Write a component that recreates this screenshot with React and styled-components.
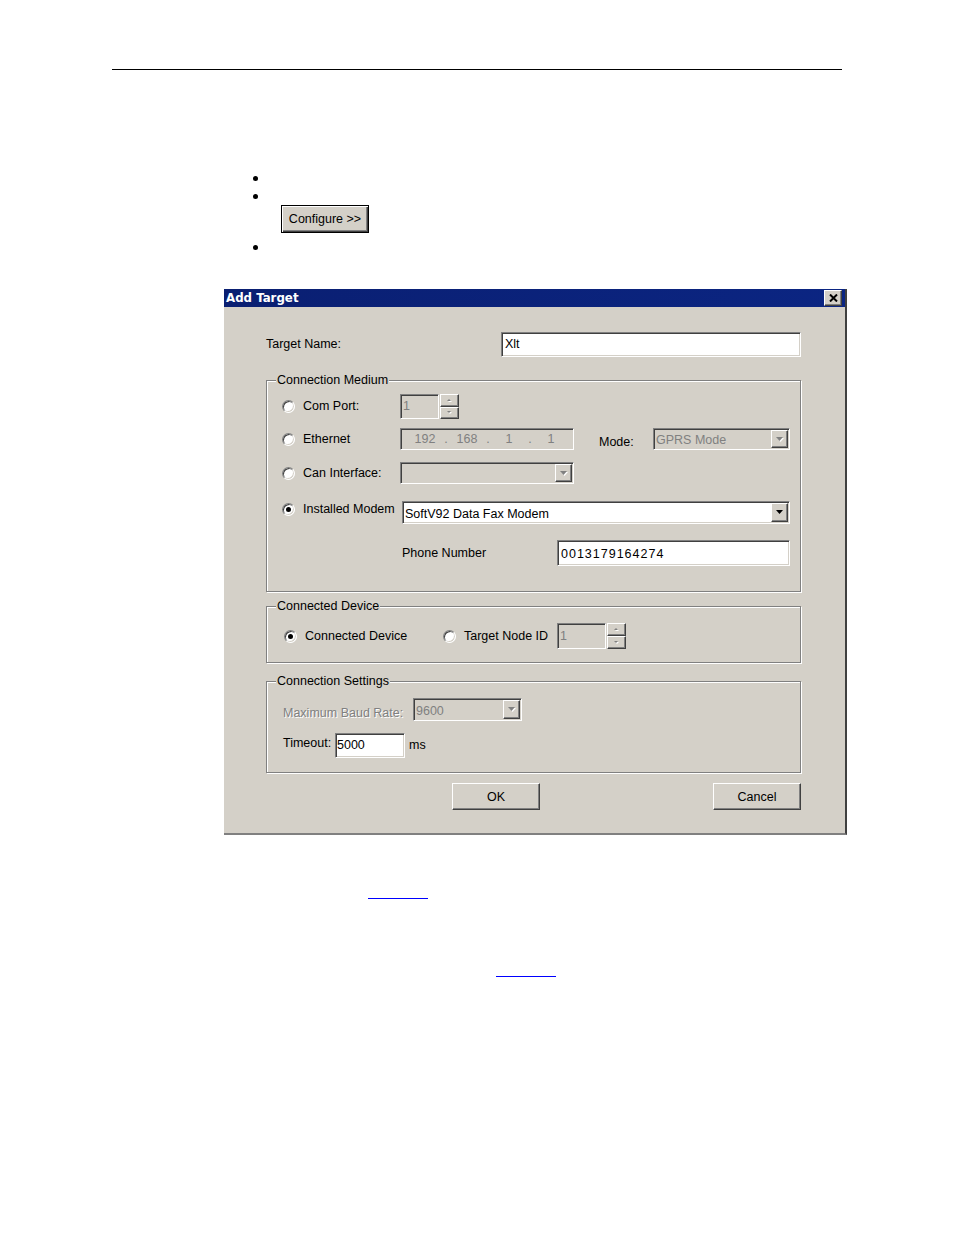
import React from "react"
import styled, { createGlobalStyle, css } from "styled-components"

/* Add Target dialog, Windows 2000 look */

const FACE = "#d4d0c8"
const SHADOW = "#808080"
const DARK = "#404040"

const GlobalStyle = createGlobalStyle`
  html, body {
    margin: 0;
    padding: 0;
    background: #fff;
  }
  body {
    font-family: "Liberation Sans", Arial, sans-serif;
  }
`

const raised = css`
  background: ${FACE};
  border: 1px solid;
  border-color: #fff ${DARK} ${DARK} #fff;
  box-shadow: inset -1px -1px 0 ${SHADOW};
`

const sunken = css`
  border: 1px solid;
  border-color: ${SHADOW} #fff #fff ${SHADOW};
  box-shadow: inset 1px 1px 0 ${DARK}, inset -1px -1px 0 ${FACE};
`

const Page = styled.div`
  width: 954px;
  min-height: 1235px;
  padding-top: 69px;
  box-sizing: border-box;
`

const Rule = styled.hr`
  width: 730px;
  height: 0;
  margin: 0 0 0 112px;
  border: 0;
  border-top: 1px solid #000;
`

const Bullets = styled.ul`
  list-style: none;
  margin: 99px 0 0;
  padding: 0 0 0 253px;
`

const Bullet = styled.li`
  display: flex;
  align-items: center;
  height: ${p => p.$h || 19}px;
  margin-top: ${p => p.$mt || 0}px;

  &::before {
    content: "";
    width: 5px;
    height: 5px;
    border-radius: 50%;
    background: #000;
  }
`

const ButtonItem = styled.li`
  padding-left: 28px;
`

const PushButton = styled.button`
  ${raised}
  box-sizing: border-box;
  width: 88px;
  height: ${p => p.$h || 27}px;
  padding: 0;
  font: 12.5px "Liberation Sans", Arial, sans-serif;
  color: #000;

  ${p => p.$default && css`
    border: 1px solid #000;
    box-shadow: inset 1px 1px 0 #fff, inset -1px -1px 0 ${DARK}, inset -2px -2px 0 ${SHADOW};
  `}
`

const Dialog = styled.div`
  box-sizing: border-box;
  width: 623px;
  margin: 32px 0 0 224px;
  background: ${FACE};
  border-right: 2px solid ${DARK};
  border-bottom: 2px solid ${SHADOW};
  font-size: 12.5px;
  color: #000;
`

const TitleBar = styled.div`
  display: flex;
  align-items: center;
  justify-content: space-between;
  height: 18px;
  padding: 0 3px 0 2px;
  background: linear-gradient(90deg, #0a1f72, #0b2582);
  color: #fff;
  font: bold 11.8px "DejaVu Sans", Verdana, sans-serif;
`

const CloseBox = styled.button`
  ${raised}
  box-sizing: border-box;
  width: 18px;
  height: 16px;
  padding: 0;
  display: flex;
  align-items: center;
  justify-content: center;
`

const DialogBody = styled.div`
  padding: 25px 44px 23px 42px;
`

const Row = styled.div`
  display: flex;
  align-items: ${p => p.$align || "center"};
  justify-content: ${p => p.$justify || "flex-start"};
  height: ${p => p.$h}px;
  margin-top: ${p => p.$mt || 0}px;
`

const Text = styled.span`
  flex: none;
  line-height: 15px;
  white-space: nowrap;
  align-self: ${p => p.$self || "auto"};
  width: ${p => (p.$w ? `${p.$w}px` : "auto")};
  margin-left: ${p => p.$ml || 0}px;
  margin-top: ${p => p.$mt || 0}px;
  color: ${p => (p.$off ? SHADOW : "inherit")};
  text-shadow: ${p => (p.$off ? "1px 1px 0 #fff" : "none")};
`

const Group = styled.section`
  margin-top: ${p => p.$mt}px;
  padding: 0 10px ${p => p.$pb}px ${p => p.$pl}px;
  border: 1px solid ${SHADOW};
  box-shadow: inset 1px 1px 0 #fff, 1px 1px 0 #fff;
`

const GroupTitle = styled.div`
  width: fit-content;
  margin: -8px 0 0 ${p => 9 - p.$pl}px;
  padding: 0 1px;
  line-height: 15px;
  background: ${FACE};
`

const Choice = styled.label`
  flex: none;
  display: flex;
  align-items: center;
  width: ${p => p.$w}px;
  margin-top: ${p => p.$mt || 0}px;
  line-height: 15px;
  white-space: nowrap;
`

const Radio = styled.span`
  flex: none;
  box-sizing: border-box;
  display: flex;
  align-items: center;
  justify-content: center;
  width: 13px;
  height: 13px;
  margin-right: 8px;
  border-radius: 50%;
  background: #fff;
  ${sunken}

  &::after {
    content: "";
    width: 5px;
    height: 5px;
    border-radius: 50%;
    background: ${p => (p.$on ? "#000" : "transparent")};
  }
`

const Field = styled.div`
  flex: ${p => (p.$grow ? "1" : "none")};
  box-sizing: border-box;
  align-self: stretch;
  display: flex;
  align-items: center;
  width: ${p => (p.$w ? `${p.$w}px` : "auto")};
  margin-left: ${p => (p.$auto ? "auto" : `${p.$ml || 0}px`)};
  padding: 1px 1px 1px ${p => p.$pl || 2}px;
  background: ${p => (p.$off ? FACE : "#fff")};
  color: ${p => (p.$off ? SHADOW : "#000")};
  letter-spacing: ${p => (p.$spaced ? "1px" : "normal")};
  white-space: nowrap;
  overflow: hidden;
  ${sunken}
`

const FieldText = styled.span`
  flex: 1;
  line-height: 15px;
  padding-top: ${p => p.$dy || 0}px;
`

const ArrowBox = styled.span`
  ${raised}
  flex: none;
  box-sizing: border-box;
  align-self: stretch;
  width: 17px;
  display: flex;
  align-items: center;
  justify-content: center;
`

const SpinBox = styled.div`
  flex: none;
  align-self: stretch;
  display: flex;
  flex-direction: column;
  width: 19px;
  margin-left: 1px;
`

const SpinButton = styled.span`
  ${raised}
  flex: 1;
  box-sizing: border-box;
  display: flex;
  align-items: center;
  justify-content: center;
`

const IpParts = styled.div`
  display: flex;
  padding: 1px 0 0 7px;
`

const IpPart = styled.span`
  width: ${p => (p.$dot ? 12 : 30)}px;
  text-align: center;
  line-height: 15px;
`

const ButtonRow = styled.div`
  display: flex;
  justify-content: space-between;
  margin-top: 10px;
  padding-left: 186px;
`

const LinkBar = styled.a`
  display: block;
  width: 60px;
  height: 0;
  margin: ${p => p.$mt}px 0 0 ${p => p.$ml}px;
  border-top: 1px solid #0000ff;
`

const Tri = ({ up, off, w = 7, h = 4 }) => {
  const main = up ? `0,${h} ${w},${h} ${w / 2},0` : `0,0 ${w},0 ${w / 2},${h}`
  const back = up ? `1,${h + 1} ${w + 1},${h + 1} ${w / 2 + 1},1` : `1,1 ${w + 1},1 ${w / 2 + 1},${h + 1}`
  return (
    <svg width={w + 1} height={h + 1} viewBox={`0 0 ${w + 1} ${h + 1}`}>
      {off && <polygon points={back} fill="#fff" />}
      <polygon points={main} fill={off ? SHADOW : "#000"} />
    </svg>
  )
}

const Combo = ({ text, w, grow, auto, ml, off }) => (
  <Field $w={w} $grow={grow} $auto={auto} $ml={ml} $off={off}>
    <FieldText $dy={3}>{text}</FieldText>
    <ArrowBox>
      <Tri off={off} />
    </ArrowBox>
  </Field>
)

const Spinner = ({ value, w }) => (
  <>
    <Field $w={w} $off>
      <FieldText>{value}</FieldText>
    </Field>
    <SpinBox>
      <SpinButton>
        <Tri up off w={4} h={2} />
      </SpinButton>
      <SpinButton>
        <Tri off w={4} h={2} />
      </SpinButton>
    </SpinBox>
  </>
)

const RadioChoice = ({ label, on, w, mt }) => (
  <Choice $w={w} $mt={mt}>
    <Radio $on={on} />
    {label}
  </Choice>
)

const App = () => {
  const ip = ["192", "168", "1", "1"]

  return (
    <Page>
      <GlobalStyle />
      <Rule />

      <Bullets>
        <Bullet />
        <Bullet $h={17} />
        <ButtonItem>
          <PushButton $default $h={28}>Configure &gt;&gt;</PushButton>
        </ButtonItem>
        <Bullet $mt={5} />
      </Bullets>

      <Dialog>
        <TitleBar>
          <span>Add Target</span>
          <CloseBox aria-label="Close">
            <svg width="9" height="8" viewBox="0 0 9 8">
              <path d="M1 0.5 L8 7.5 M8 0.5 L1 7.5" stroke="#000" strokeWidth="2" />
            </svg>
          </CloseBox>
        </TitleBar>

        <DialogBody>
          <Row $h={25} $justify="space-between">
            <Text>Target Name:</Text>
            <Field $w={300} $pl={3}>
              <FieldText>Xlt</FieldText>
            </Field>
          </Row>

          <Group $mt={23} $pb={25} $pl={15}>
            <GroupTitle $pl={15}>Connection Medium</GroupTitle>

            <Row $h={25} $mt={6}>
              <RadioChoice label="Com Port:" w={118} />
              <Spinner value="1" w={39} />
            </Row>

            <Row $h={22} $mt={9}>
              <RadioChoice label="Ethernet" w={118} />
              <Field $w={174} $off>
                <IpParts>
                  {ip.map((part, i) => (
                    <React.Fragment key={i}>
                      {i > 0 && <IpPart $dot>.</IpPart>}
                      <IpPart>{part}</IpPart>
                    </React.Fragment>
                  ))}
                </IpParts>
              </Field>
              <Text $ml={25} $self="flex-end">Mode:</Text>
              <Combo text="GPRS Mode" w={137} auto off />
            </Row>

            <Row $h={22} $mt={12}>
              <RadioChoice label="Can Interface:" w={118} />
              <Combo text="" w={174} off />
            </Row>

            <Row $h={23} $mt={17} $align="flex-start">
              <RadioChoice label="Installed Modem" w={120} on mt={1} />
              <Combo text="SoftV92 Data Fax Modem" grow />
            </Row>

            <Row $h={26} $mt={16}>
              <Text $ml={120}>Phone Number</Text>
              <Field $w={233} $auto $pl={3} $spaced>
                <FieldText $dy={2}>0013179164274</FieldText>
              </Field>
            </Row>
          </Group>

          <Group $mt={14} $pb={13} $pl={17}>
            <GroupTitle $pl={17}>Connected Device</GroupTitle>
            <Row $h={26} $mt={9}>
              <RadioChoice label="Connected Device" w={159} on />
              <RadioChoice label="Target Node ID" w={114} />
              <Spinner value="1" w={49} />
            </Row>
          </Group>

          <Group $mt={18} $pb={14} $pl={16}>
            <GroupTitle $pl={16}>Connection Settings</GroupTitle>
            <Row $h={23} $mt={9}>
              <Text $w={130} $off $self="flex-end">Maximum Baud Rate:</Text>
              <Combo text="9600" w={109} off />
            </Row>
            <Row $h={25} $mt={12}>
              <Text $w={52} $self="flex-start" $mt={3}>Timeout:</Text>
              <Field $w={70} $pl={1}>
                <FieldText>5000</FieldText>
              </Field>
              <Text $ml={4}>ms</Text>
            </Row>
          </Group>

          <ButtonRow>
            <PushButton>OK</PushButton>
            <PushButton>Cancel</PushButton>
          </ButtonRow>
        </DialogBody>
      </Dialog>

      <LinkBar href="#" $mt={63} $ml={368} aria-label="link" />
      <LinkBar href="#" $mt={77} $ml={496} aria-label="link" />
    </Page>
  )
}

export default App
